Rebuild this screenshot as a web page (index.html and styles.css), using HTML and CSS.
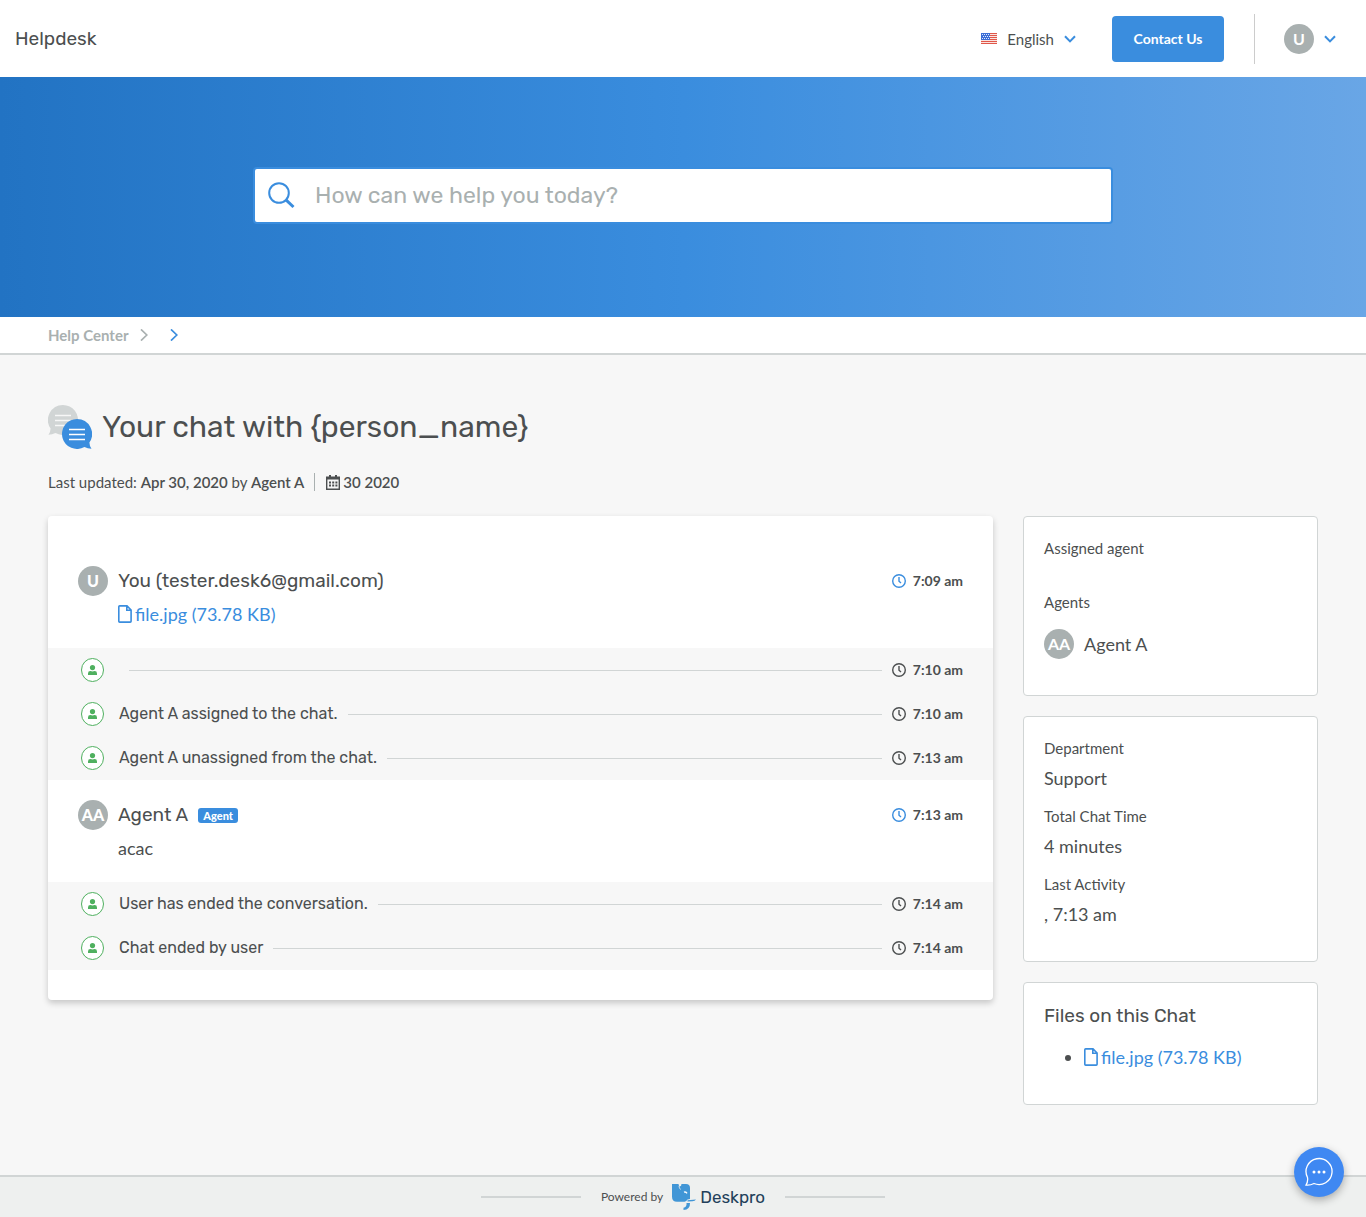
FILE: index.html
```html
<!DOCTYPE html>
<html lang="en">
<head>
<meta charset="utf-8">
<meta name="viewport" content="width=device-width, initial-scale=1">
<title>Your chat - Helpdesk</title>
<link rel="stylesheet" href="styles.css">
</head>
<body>
<svg class="sprite" aria-hidden="true">
  <symbol id="chevron" viewBox="0 0 12 8"><path d="M1 1.2 6 6.4 11 1.2" fill="none" stroke="currentColor" stroke-width="2"/></symbol>
  <symbol id="crumb" viewBox="0 0 8 12"><path d="M1 .4 6.800 6 1 11.600" fill="none" stroke="currentColor" stroke-width="1.700"/></symbol>
  <symbol id="clock" viewBox="0 0 14 14"><circle cx="7" cy="7" r="6.300" fill="none" stroke="currentColor" stroke-width="1.400"/><path d="M7 3v4.200l2 1.800" fill="none" stroke="currentColor" stroke-width="1.400"/></symbol>
  <symbol id="file" viewBox="0 0 14 18"><path d="M1.7.9H9L13.1 5v11.2q0 .9-.9.9H1.700q-.9 0-.9-.9V1.800q0-.9.9-.9zM8.800 1v4.300H13" fill="none" stroke="currentColor" stroke-width="1.600"/></symbol>
  <symbol id="person" viewBox="0 0 24 24"><ellipse cx="12.500" cy="12" rx="11" ry="11.500" fill="#fff" stroke="currentColor"/><circle cx="12.500" cy="9.600" r="2.600" fill="currentColor"/><path d="M8 17v-1.600q0-2.400 2.400-2.400 2.100.8 4.200 0 2.400 0 2.400 2.400V17z" fill="currentColor"/></symbol>
</svg>

<header class="topbar">
  <a class="brand" href="#">Helpdesk</a>
  <nav class="topnav">
    <button class="lang" type="button">
      <svg class="flag" viewBox="0 0 16 11" aria-hidden="true"><path fill="#fbe3df" d="M0 0h16v11H0z"/><path d="M0 .5h16M0 2.500h16M0 4.500h16M0 6.500h16M0 8.500h16M0 10.500h16" stroke="#e0574a"/><path fill="#3d6fd6" d="M0 0h9v7H0z"/><path d="M1 1.500h8M2 3.500h7M1 5.500h8" stroke="#dfe8ff" stroke-dasharray="1 1"/></svg>
      English
      <svg class="chevron" aria-hidden="true"><use href="#chevron"/></svg>
    </button>
    <a class="contact" href="#">Contact Us</a>
    <button class="account" type="button" aria-label="Account menu">
      <span class="avatar">U</span>
      <svg class="chevron" aria-hidden="true"><use href="#chevron"/></svg>
    </button>
  </nav>
</header>

<section class="hero">
  <form class="search" role="search">
    <svg class="search-icon" viewBox="0 0 28 28" aria-hidden="true"><circle cx="12" cy="12" r="9.800" fill="none" stroke="currentColor" stroke-width="2"/><path d="m18.700 18.700 7.800 7.300" stroke="currentColor" stroke-width="3"/></svg>
    <input type="search" aria-label="Search" placeholder="How can we help you today?">
  </form>
</section>

<nav class="crumbs" aria-label="Breadcrumb">
  <a href="#">Help Center</a>
  <svg class="crumb" aria-hidden="true"><use href="#crumb"/></svg>
  <svg class="crumb current" aria-hidden="true"><use href="#crumb"/></svg>
</nav>

<main class="page">
  <div class="title">
    <svg class="title-icon" viewBox="0 0 44 44" aria-hidden="true">
      <path fill="#d1d5d5" d="M15 0a15 15 0 1 1-7.500 28Q4 29.500.5 29.800 2.500 27 2.600 23.500A15 15 0 0 1 15 0z"/>
      <path d="M7 10.500h16M7 15.500h16M7 20.500h16" stroke="#f7f7f7" stroke-width="1.600"/>
      <path fill="#3a8dde" d="M29 14a15 15 0 1 0 7.500 28q3 1.500 7 1.800-2-2.800-2.100-6.300A15 15 0 0 0 29 14z"/>
      <path d="M21 24.500h16M21 29.500h16M21 34.500h16" stroke="#fff" stroke-width="1.600"/>
    </svg>
    <h1>Your chat with {person_name}</h1>
  </div>
  <div class="meta">
    <span>Last updated: <b>Apr 30, 2020</b> by <b>Agent A</b></span>
    <span class="date">
      <svg class="calendar" viewBox="0 0 14 16" aria-hidden="true"><path d="M.7 3.200h12.600v12H.7z" fill="none" stroke="currentColor" stroke-width="1.400"/><path d="M.7 4.500h12.600M4 1v4M10 1v4" stroke="currentColor" stroke-width="2"/><path d="M3 8.500h8.500M3 11.500h8.500" stroke="currentColor" stroke-width="1.800" stroke-dasharray="2 1.200"/></svg>
      <b>30 2020</b>
    </span>
  </div>

  <div class="columns">
    <section class="chat">
      <article class="message">
        <header class="message-head">
          <span class="avatar heavy">U</span>
          <h2>You (tester.desk6@gmail.com)</h2>
          <span class="time"><svg class="clock blue" aria-hidden="true"><use href="#clock"/></svg>7:09 am</span>
        </header>
        <div class="message-body"><a class="file" href="#"><svg aria-hidden="true"><use href="#file"/></svg>file.jpg (73.78 KB)</a></div>
      </article>
      <div class="event">
        <svg class="person" aria-hidden="true"><use href="#person"/></svg>
        <span></span>
        <span class="time"><svg class="clock" aria-hidden="true"><use href="#clock"/></svg>7:10 am</span>
      </div>
      <div class="event">
        <svg class="person" aria-hidden="true"><use href="#person"/></svg>
        <span>Agent A assigned to the chat.</span>
        <span class="time"><svg class="clock" aria-hidden="true"><use href="#clock"/></svg>7:10 am</span>
      </div>
      <div class="event">
        <svg class="person" aria-hidden="true"><use href="#person"/></svg>
        <span>Agent A unassigned from the chat.</span>
        <span class="time"><svg class="clock" aria-hidden="true"><use href="#clock"/></svg>7:13 am</span>
      </div>
      <article class="message">
        <header class="message-head">
          <span class="avatar heavy">AA</span>
          <h2>Agent A</h2>
          <span class="badge">Agent</span>
          <span class="time"><svg class="clock blue" aria-hidden="true"><use href="#clock"/></svg>7:13 am</span>
        </header>
        <div class="message-body">acac</div>
      </article>
      <div class="event">
        <svg class="person" aria-hidden="true"><use href="#person"/></svg>
        <span>User has ended the conversation.</span>
        <span class="time"><svg class="clock" aria-hidden="true"><use href="#clock"/></svg>7:14 am</span>
      </div>
      <div class="event">
        <svg class="person" aria-hidden="true"><use href="#person"/></svg>
        <span>Chat ended by user</span>
        <span class="time"><svg class="clock" aria-hidden="true"><use href="#clock"/></svg>7:14 am</span>
      </div>
    </section>

    <aside class="side">
      <section class="card">
        <h3>Assigned agent</h3>
        <p class="none"></p>
        <h3>Agents</h3>
        <div class="agent"><span class="avatar">AA</span>Agent A</div>
      </section>
      <section class="card">
        <h3>Department</h3>
        <p>Support</p>
        <h3>Total Chat Time</h3>
        <p>4 minutes</p>
        <h3>Last Activity</h3>
        <p>, 7:13 am</p>
      </section>
      <section class="card">
        <h2>Files on this Chat</h2>
        <ul>
          <li><a class="file" href="#"><svg aria-hidden="true"><use href="#file"/></svg>file.jpg (73.78 KB)</a></li>
        </ul>
      </section>
    </aside>
  </div>
</main>

<footer class="footer">
  <span class="powered">Powered by</span>
  <a class="deskpro" href="#">
    <svg viewBox="0 0 24 26" aria-hidden="true"><path fill="#4196d6" d="M0 0h6.500q.3 2 1.300 2.500Q9.500 2 9.500 0H14q4 0 4 4v11l-2.500.5q-1 2-3 2.200H5q-5 0-5-5z"/><path d="M12 8.200q2-.8 3 1.200" fill="none" stroke="#fff" stroke-width="1.300"/><path d="M7 2q.2 2 1.500 3.500" fill="none" stroke="#eef0ef" stroke-width=".8"/><path fill="#4196d6" d="M15.500 16.300 24 15.500q-1 1.600-3.500 1.700l-5 .3zM14.500 19H18q.3 6.500-6.500 7v-2.200q3.500-.6 3-4.800z"/></svg>
    Deskpro
  </a>
</footer>

<button class="chat-launcher" type="button" aria-label="Open chat">
  <svg viewBox="0 0 30 30" aria-hidden="true"><path d="M3.500 20.500A13 13 0 1 1 10 26.500Q6 28.500 2 28q2.200-3.500 1.500-7.500z" fill="none" stroke="#fff" stroke-width="1.300"/><g fill="#fff"><circle cx="10" cy="15" r="1.500"/><circle cx="15" cy="15" r="1.500"/><circle cx="20" cy="15" r="1.500"/></g></svg>
</button>
</body>
</html>
```
FILE: styles.css
```css
:root {
  --blue: #3a8dde;
  --ink: #4c4f50;
  --muted: #a9b0b0;
  --line: #d1d5d5;
  --pale: #f7f7f7;
  --display: Rubik, Roboto, sans-serif;
}

* { box-sizing: border-box; }

body {
  margin: 0;
  min-height: 100vh;
  display: flex;
  flex-direction: column;
  background: var(--pale);
  color: var(--ink);
  font: 15px/24px Lato, sans-serif;
}

h1, h2, h3, p, ul { margin: 0; font-weight: 400; }
a { color: var(--blue); text-decoration: none; }
button { border: 0; padding: 0; background: none; color: inherit; font: inherit; cursor: pointer; }
svg { flex: none; }
.sprite { position: absolute; width: 0; height: 0; }

.topbar {
  display: flex;
  align-items: center;
  justify-content: space-between;
  height: 77px;
  padding: 0 30px 0 15px;
  background: #fff;
}
.brand { color: var(--ink); font: 19px/24px var(--display); }
.topnav { display: flex; align-items: center; }
.lang, .account { display: flex; align-items: center; gap: 10px; }
.flag { width: 16px; height: 11px; }
.chevron { width: 12px; height: 8px; color: var(--blue); }
.contact {
  width: 112px;
  margin: 0 30px 0 36px;
  border-radius: 4px;
  background: var(--blue);
  color: #fff;
  font-size: 14px;
  font-weight: 700;
  line-height: 46px;
  text-align: center;
}
.account { height: 50px; padding-left: 29px; border-left: 1px solid #ccc; }
.avatar {
  flex: none;
  width: 30px;
  border-radius: 50%;
  background: var(--muted);
  color: #fff;
  font-size: 16px;
  font-weight: 700;
  line-height: 30px;
  text-align: center;
}
.heavy { font-weight: 900; }

.hero {
  display: flex;
  align-items: center;
  justify-content: center;
  height: 240px;
  padding: 0 20px 4px;
  background: linear-gradient(90deg, #2273c3 0%, #3a8dde 50%, #69a6e6 100%);
}
.search {
  display: flex;
  align-items: center;
  gap: 20px;
  width: 860px;
  height: 57px;
  padding: 0 12px;
  border: 2px solid var(--blue);
  border-radius: 4px;
  background: #fff;
  color: var(--blue);
}
.search-icon { width: 28px; height: 28px; }
.search input {
  flex: 1;
  min-width: 0;
  padding: 0;
  border: 0;
  outline: 0;
  background: none;
  color: var(--ink);
  font: 23px/30px var(--display);
}
.search input::placeholder { color: var(--muted); }

.crumbs {
  display: flex;
  align-items: center;
  height: 38px;
  padding: 0 48px;
  border-bottom: 2px solid var(--line);
  background: #fff;
}
.crumbs a { margin-right: 12px; color: var(--muted); font-weight: 700; }
.crumb { width: 8px; height: 12px; margin-right: 22px; color: var(--muted); }
.current { color: var(--blue); }

.page { flex: 1; padding: 50px 48px 70px; }
.title { display: flex; align-items: center; gap: 10px; }
.title-icon { width: 44px; height: 44px; }
h1 { font: 30px/44px var(--display); }
.meta { display: flex; align-items: center; margin: 21px 0 22px; }
.meta b { font-weight: 600; }
.date { display: flex; align-items: center; gap: 3px; margin-left: 10px; padding-left: 11px; border-left: 1px solid var(--muted); line-height: 18px; }
.calendar { width: 14px; height: 16px; }

.columns { display: grid; grid-template-columns: 1fr 295px; gap: 30px; align-items: start; }
.chat {
  padding: 30px 0;
  border-radius: 4px;
  background: #fff;
  box-shadow: 0 3px 6px rgba(0, 0, 0, .2);
}
.message { padding: 20px 30px; }
.message-head { display: flex; align-items: center; gap: 10px; }
h2 { font: 19px/28px var(--display); }
.message-body { padding: 4px 0 0 40px; font-size: 18px; line-height: 28px; }
.time { display: flex; align-items: center; gap: 7px; margin-left: auto; font-size: 14px; font-weight: 700; }
.clock { width: 14px; height: 14px; }
.blue { color: var(--blue); }
.badge {
  padding: 0 5px;
  border-radius: 3px;
  background: var(--blue);
  color: #fff;
  font-size: 11px;
  font-weight: 900;
  line-height: 15px;
}
.file { display: inline-flex; align-items: center; gap: 3px; font-size: 18px; line-height: 28px; vertical-align: top; }
.file svg { width: 14px; height: 18px; }

.event {
  display: flex;
  align-items: center;
  height: 44px;
  padding: 0 30px 0 32px;
  background: var(--pale);
  font: 16px/24px var(--display);
}
.event::after { content: ""; order: 1; flex: 1; height: 1px; margin: 0 10px; background: var(--line); }
.event .time { order: 2; margin: 0; font: 700 14px/24px Lato, sans-serif; }
.person { width: 24px; height: 24px; margin-right: 15px; color: #4fb05f; }

.side { display: grid; gap: 20px; }
.card { padding: 19px 20px 21px; border: 1px solid var(--line); border-radius: 4px; background: #fff; }
h3 { font-size: 15px; line-height: 24px; }
.card p { margin: 6px 0 14px; font-size: 18px; line-height: 24px; }
.card .none { height: 10px; }
.agent { display: flex; align-items: center; gap: 10px; margin: 15px 0; font-size: 18px; }
.card ul { margin: 13px 0 12px; padding-left: 40px; font-size: 18px; line-height: 28px; }

.footer {
  display: flex;
  align-items: center;
  justify-content: center;
  height: 42px;
  border-top: 2px solid var(--line);
  background: #eef0ef;
  font-size: 12px;
}
.footer::before, .footer::after { content: ""; width: 100px; height: 2px; margin: 0 20px; background: var(--line); }
.powered { margin-right: 9px; }
.deskpro { display: flex; align-items: center; gap: 4px; color: #223f5a; font: 17px/24px var(--display); }
.deskpro svg { width: 24px; height: 26px; }

.chat-launcher {
  position: fixed;
  right: 22px;
  bottom: 20px;
  display: grid;
  place-items: center;
  width: 50px;
  height: 50px;
  border-radius: 50%;
  background: #3f88f2;
  box-shadow: 0 3px 8px rgba(0, 0, 0, .3);
}
.chat-launcher svg { width: 30px; height: 30px; }
```
